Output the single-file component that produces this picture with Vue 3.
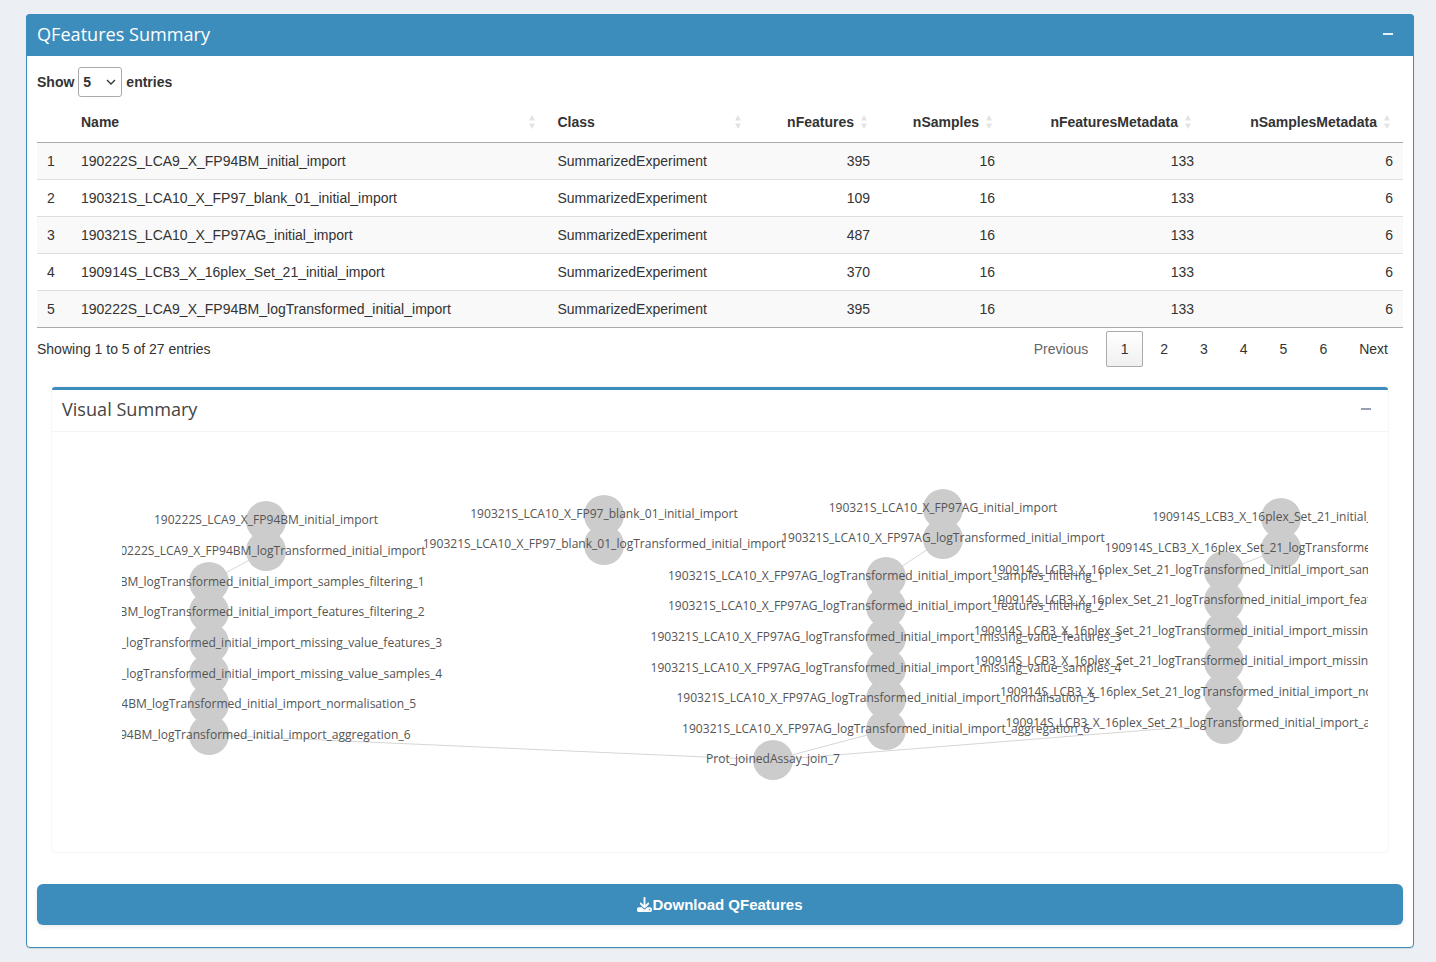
<template>
  <div class="page">
    <section class="box">
      <header class="box-head">
        <h3>QFeatures Summary</h3>
        <span class="collapse-mark"></span>
      </header>
      <div class="box-body">
        <div class="length">
          <span>Show</span>
          <span class="select">5
            <svg width="10" height="6" viewBox="0 0 10 6"><path d="M1 1l4 4 4-4" fill="none" stroke="#333" stroke-width="1.3" /></svg>
          </span>
          <span>entries</span>
        </div>

        <table class="grid">
          <thead>
            <tr>
              <th class="c-idx"></th>
              <th v-for="col in columns" :key="col.label" :class="[col.cls, { num: col.num }]">
                {{ col.label }}
                <svg class="sort" width="8" height="16" viewBox="0 0 8 16">
                  <path d="M4 1l3 5.500h-6z" fill="#e3e3e3" />
                  <path d="M4 15L1 9.500h6z" fill="#e3e3e3" />
                </svg>
              </th>
            </tr>
          </thead>
          <tbody>
            <tr v-for="(row, i) in rows" :key="row[0]">
              <td>{{ i + 1 }}</td>
              <td>{{ row[0] }}</td>
              <td>SummarizedExperiment</td>
              <td class="num">{{ row[1] }}</td>
              <td class="num">16</td>
              <td class="num">133</td>
              <td class="num">6</td>
            </tr>
          </tbody>
        </table>

        <div class="table-foot">
          <span>Showing 1 to 5 of 27 entries</span>
          <nav class="pager">
            <a class="muted">Previous</a>
            <a class="current">1</a>
            <a>2</a>
            <a>3</a>
            <a>4</a>
            <a>5</a>
            <a>6</a>
            <a class="next">Next</a>
          </nav>
        </div>

        <section class="inner-box">
          <header class="inner-head">
            <h3>Visual Summary</h3>
            <span class="inner-mark"></span>
          </header>
          <svg class="graph" width="1246" height="420" viewBox="122 432 1246 420">
            <line v-for="(e, i) in edges" :key="'e' + i" :x1="e[0]" :y1="e[1]" :x2="e[2]" :y2="e[3]" stroke="#d6d6d6" stroke-width="1" />
            <circle v-for="(n, i) in nodes" :key="'n' + i" :cx="n.x" :cy="n.y" r="20" fill="#ccc" />
            <text v-for="(n, i) in nodes" :key="'t' + i" :x="n.x" :y="n.y + n.dy" text-anchor="middle" class="label">{{ n.label }}</text>
          </svg>
        </section>

        <button class="download">
          <svg width="15" height="15" viewBox="0 0 512 512"><path fill="#fff" d="M288 32c0-17.700-14.300-32-32-32s-32 14.300-32 32V274.700l-73.400-73.400c-12.500-12.500-32.800-12.500-45.300 0s-12.500 32.800 0 45.300l128 128c12.500 12.500 32.800 12.500 45.300 0l128-128c12.500-12.500 12.500-32.800 0-45.300s-32.800-12.500-45.300 0L288 274.700V32zM64 352c-35.300 0-64 28.700-64 64v32c0 35.300 28.700 64 64 64H448c35.300 0 64-28.700 64-64V416c0-35.300-28.700-64-64-64H346.500l-45.300 45.300c-25 25-65.500 25-90.500 0L165.500 352H64zm368 56a24 24 0 1 1 0 48 24 24 0 1 1 0-48z" /></svg>
          <span>Download QFeatures</span>
        </button>
      </div>
    </section>
  </div>
</template>

<script setup>
const columns = [
  { label: 'Name', cls: 'c-name' },
  { label: 'Class', cls: 'c-class' },
  { label: 'nFeatures', cls: 'c-nf', num: true },
  { label: 'nSamples', cls: 'c-ns', num: true },
  { label: 'nFeaturesMetadata', cls: 'c-meta', num: true },
  { label: 'nSamplesMetadata', cls: 'c-meta', num: true },
]

const rows = [
  ['190222S_LCA9_X_FP94BM_initial_import', 395],
  ['190321S_LCA10_X_FP97_blank_01_initial_import', 109],
  ['190321S_LCA10_X_FP97AG_initial_import', 487],
  ['190914S_LCB3_X_16plex_Set_21_initial_import', 370],
  ['190222S_LCA9_X_FP94BM_logTransformed_initial_import', 395],
]

const steps = [
  'samples_filtering_1',
  'features_filtering_2',
  'missing_value_features_3',
  'missing_value_samples_4',
  'normalisation_5',
  'aggregation_6',
]

// one assay: import node, log node, then the chain of processing steps
function assay(name, x, ys, chainX, chainYs, dy = 3) {
  const list = [
    { x, y: ys[0], dy, label: `${name}_initial_import` },
    { x, y: ys[1], dy, label: `${name}_logTransformed_initial_import` },
  ]
  chainYs.forEach((y, i) => {
    list.push({ x: chainX, y, dy, label: `${name}_logTransformed_initial_import_${steps[i]}` })
  })
  return list
}

const nodes = [
  ...assay('190222S_LCA9_X_FP94BM', 266, [521, 551], 209, [582, 612, 643, 674, 704, 735], 4),
  ...assay('190321S_LCA10_X_FP97_blank_01', 604, [515, 545], 0, []),
  ...assay('190321S_LCA10_X_FP97AG', 943, [509, 539], 886, [577, 607, 638, 669, 699, 730]),
  ...assay('190914S_LCB3_X_16plex_Set_21', 1281, [518, 549], 1224, [571, 601, 632, 662, 693, 724]),
  { x: 773, y: 760, dy: 3, label: 'Prot_joinedAssay_join_7' },
]
nodes[0].dy = 3

const edges = [
  [266, 551, 209, 582],
  [943, 539, 886, 577],
  [1281, 549, 1224, 571],
  [209, 735, 773, 760],
  [886, 730, 773, 760],
  [1224, 724, 773, 760],
]
</script>

<style>
html, body {
  margin: 0;
  background: #ecf0f5;
}
</style>

<style scoped>
.page {
  padding: 14px 22px 14px 26px;
  font-family: "Liberation Sans", Arial, sans-serif;
  font-size: 14px;
  color: #333;
}

.box {
  border: 1px solid #3c8dbc;
  border-radius: 4px;
  background: #fff;
  box-shadow: 0 1px 1px rgba(0, 0, 0, 0.1);
}

.box-head {
  display: flex;
  align-items: center;
  justify-content: space-between;
  box-sizing: border-box;
  height: 42px;
  margin: -1px -1px 0;
  padding: 0 21px 2px 11px;
  border-radius: 4px 4px 0 0;
  background: #3c8dbc;
  color: #fff;
}

.box-head h3,
.inner-head h3 {
  margin: 0;
  font-family: "Open Sans", sans-serif;
  font-size: 18.100px;
  font-weight: 400;
}

.collapse-mark {
  width: 10px;
  height: 2px;
  background: #e8f1f7;
}

.box-body {
  padding: 11px 10px 22px;
}

.length {
  display: flex;
  align-items: center;
  gap: 4px;
  height: 30px;
  font-weight: 700;
}

.select {
  display: flex;
  align-items: center;
  justify-content: space-between;
  box-sizing: border-box;
  width: 44px;
  height: 30px;
  padding: 0 5px 0 4px;
  border: 1px solid #aaa;
  border-radius: 3px;
}

.grid {
  width: 1366px;
  margin-top: 5px;
  border-collapse: collapse;
  table-layout: fixed;
}

.grid th {
  position: relative;
  box-sizing: border-box;
  height: 40px;
  padding: 0 26px 0 10px;
  border-bottom: 1px solid #aaa;
  font-weight: 700;
  text-align: left;
}

.grid th.num {
  text-align: right;
}

.grid th.c-idx {
  padding: 0;
}

.c-idx { width: 34px; }
.c-name { width: 476.5px; }
.c-class { width: 206.5px; }
.c-nf { width: 126px; }
.c-ns { width: 125px; }
.c-meta { width: 199px; }

.sort {
  position: absolute;
  top: 12px;
  right: 12px;
}

.grid td {
  box-sizing: border-box;
  height: 37px;
  padding: 0 10px;
  border-bottom: 1px solid #ddd;
  color: #333;
}

.grid tbody tr:nth-child(odd) td {
  background: #f9f9f9;
}

.grid tbody tr:last-child td {
  border-bottom-color: #aaa;
}

.grid td.num {
  text-align: right;
}

.table-foot {
  display: flex;
  align-items: flex-start;
  justify-content: space-between;
  height: 56px;
  padding-top: 3px;
}

.table-foot > span {
  margin-top: 10px;
}

.pager {
  display: flex;
  align-items: center;
  height: 36px;
  padding-right: 15px;
}

.pager a {
  box-sizing: border-box;
  min-width: 39.800px;
  text-align: center;
  color: #333;
}

.pager .muted {
  margin-right: 18px;
  min-width: 0;
  color: #666;
}

.pager .current {
  width: 37px;
  min-width: 37px;
  height: 36px;
  line-height: 34px;
  border: 1px solid #aaa;
  border-radius: 2px;
  background: linear-gradient(#fff, #f0f0f0);
  margin-right: 1px;
}

.pager .next {
  margin-left: 16px;
  min-width: 0;
}

.inner-box {
  box-sizing: border-box;
  width: 1336px;
  margin: 0 auto 0 15px;
  border-top: 3px solid #3c8dbc;
  border-radius: 3px;
  box-shadow: 0 0 2px rgba(0, 0, 0, 0.12);
  background: #fff;
}

.inner-head {
  display: flex;
  align-items: center;
  justify-content: space-between;
  box-sizing: border-box;
  height: 42px;
  padding: 0 17px 2px 10px;
  border-bottom: 1px solid #f4f4f4;
  color: #444;
}

.inner-mark {
  width: 10px;
  height: 1.500px;
  background: #97a0b3;
}

.graph {
  display: block;
  margin-left: 70px;
}

.label {
  font-family: "Open Sans", sans-serif;
  font-size: 12.050px;
  fill: #555;
}

.download {
  display: flex;
  align-items: center;
  justify-content: center;
  width: 100%;
  height: 41px;
  margin-top: 32px;
  padding: 0;
  border: 0;
  border-radius: 6px;
  background: #3c8dbc;
  box-shadow: 0 2px 5px rgba(0, 0, 0, 0.08);
  color: #fff;
  font-family: "Liberation Sans", Arial, sans-serif;
  font-size: 15px;
  font-weight: 700;
}
</style>
